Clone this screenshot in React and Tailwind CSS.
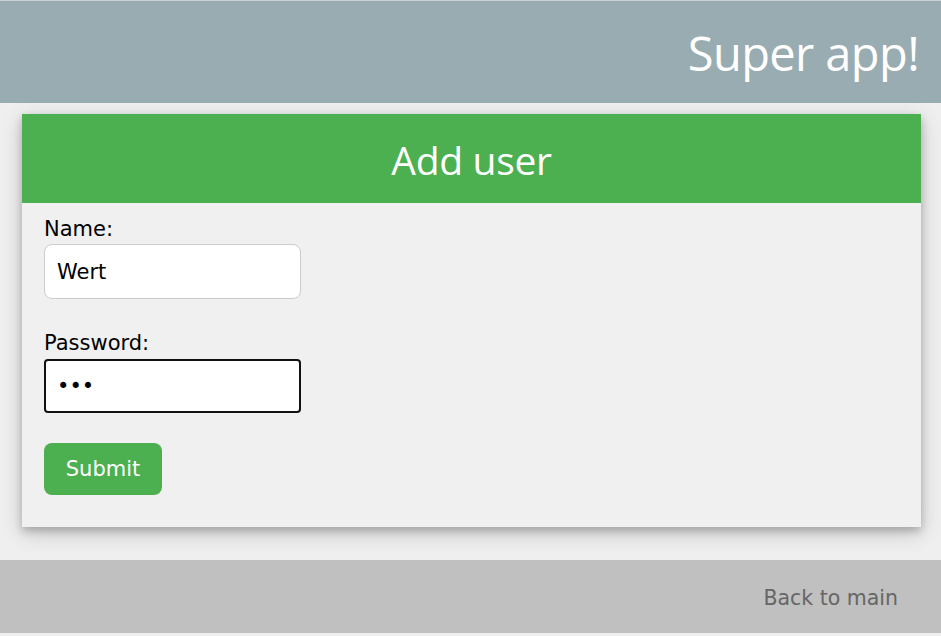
export default function App() {
  return (
    <div className="min-h-[636px] bg-[#efefef] flex flex-col">
      <div className="h-px bg-[#c9d1d4]" />
      <header className="h-[102px] bg-[#99acb2] flex items-center justify-end pr-[22px]">
        <h1 className="text-white text-[47px] leading-none font-['Open_Sans',sans-serif] tracking-[-0.6px] mt-[2px]">Super app!</h1>
      </header>
      <main className="ml-[22px] mr-[20px] mt-[11px] mb-[33px] bg-[#f0f0f0] shadow-[0_4px_8px_0_rgba(0,0,0,0.2),0_6px_20px_0_rgba(0,0,0,0.19)]">
        <div className="h-[89px] bg-[#4caf50] flex items-center justify-center">
          <h2 className="text-white text-[39px] leading-none font-['Open_Sans',sans-serif] tracking-[-0.3px] mt-[1px]">Add user</h2>
        </div>
        <form className="px-[22px] pt-[14px] pb-[32px] font-['DejaVu_Sans',Verdana,sans-serif] text-[21px] leading-[24px] text-black" onSubmit={(e) => e.preventDefault()}>
          <label className="block">Name:</label>
          <input
            type="text"
            defaultValue="Wert"
            className="mt-[3px] block w-[257px] h-[55px] px-[12px] bg-white border border-[#cccccc] rounded-[8px] text-[21px] outline-none font-['DejaVu_Sans',Verdana,sans-serif]"
          />
          <label className="block mt-[32px]">Password:</label>
          <input
            type="password"
            defaultValue="abc"
            className="mt-[4px] block w-[257px] h-[54px] px-[11px] bg-white border-2 border-[#111] rounded-[4px] text-[21px] outline-none font-['DejaVu_Sans',Verdana,sans-serif]"
          />
          <button className="mt-[30px] block w-[118px] h-[52px] bg-[#4caf50] text-white rounded-[8px] text-[21px]">
            Submit
          </button>
        </form>
      </main>
      <footer className="h-[73px] bg-[#c0c0c0] flex items-center justify-end pr-[43px]">
        <span className="text-[#666666] text-[20.5px] mt-[3px] font-['DejaVu_Sans',Verdana,sans-serif]">Back to main</span>
      </footer>
      <div className="h-[3px] bg-[#efefef]" />
    </div>
  );
}
